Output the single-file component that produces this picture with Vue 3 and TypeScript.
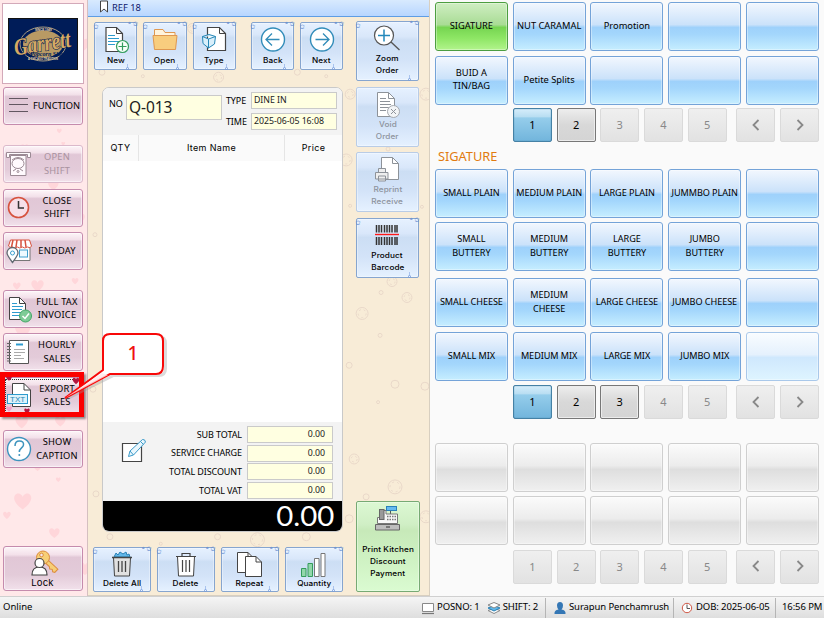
<script setup lang="ts">
interface SideItem { lines: string[]; icon: string; cls: string }
interface ToolItem { lines: string[]; icon: string; cls?: string }
interface PageItem { label: string; state: string }

const icons: Record<string, string> = {
  menu: '<path d="M3 10.500H22M3 16.500H22M3 23.500H22" stroke="#625761" stroke-width="1"/>',
  shift: '<g stroke="#9b8a94" fill="#fffafd"><path d="M2.500 6.500H26.500V11.500H23.500V8.500H5.500V11.500H2.500Z"/><path d="M6.500 9.500H22V29.500H6.500Z"/><ellipse cx="14" cy="17.500" rx="6" ry="5"/><path d="M8 14q6-5 12 0M9 25l3-2M19 25l-3-2" fill="none"/><circle cx="14" cy="25.500" r="1"/></g>',
  clock: '<circle cx="14.500" cy="17.500" r="10" fill="#f6dfe8" stroke="#d6523e" stroke-width="1.600"/><path d="M14.500 11V18H20" fill="none" stroke="#333" stroke-width="1.500"/>',
  shop: '<path d="M7.500 14V27.500H26V14" fill="#fff" stroke="#777"/><path d="M6.500 7H25.500L27.500 13q-1 3-4 1-3 2-5 0-3 2-5 0-3 2-5 0-3 1-4-1Z" fill="#fff" stroke="#d6523e"/><path d="M9 7L7.500 14M13 7L12 14M17 7V14M21 7L22 14" stroke="#d6523e" stroke-width="1.500"/><rect x="15.500" y="17" width="8" height="7" fill="#eefaff" stroke="#3e9fce"/><path d="M8.500 29.500Q3 22 3 20A5.500 5.500 0 0 1 14 20Q14 22 8.500 29.500Z" fill="#fff" stroke="#626a72" stroke-width="1.300"/><circle cx="8.500" cy="20" r="2" fill="#fff" stroke="#3e9fce"/>',
  invoice: '<path d="M5.500 6.500H15.500L21.500 12.500V28.500H5.500Z" fill="#fff" stroke="#444"/><path d="M15.500 6.500V12.500H21.500" fill="none" stroke="#444"/><path d="M8 12.500H13M8 15.500H19M8 18.500H18M8 21.500H17M8 24.500H15" stroke="#2d9bce"/><circle cx="21.500" cy="25" r="6" fill="#7ecb96" stroke="#42a766"/><path d="M18.500 25L21 27.500L25 22.500" fill="none" stroke="#fff" stroke-width="1.500"/>',
  notebook: '<path d="M5.500 6.500H24.500V29.500H5.500Z" fill="#fff" stroke="#555"/><path d="M3 9.500H7M3 12.500H7M3 15.500H7M3 18.500H7M3 21.500H7M3 24.500H7M3 27H7" stroke="#666"/><path d="M12 10.500H19" stroke="#2d9bce" stroke-width="2"/><path d="M10 15.500H21M10 18.500H21M10 21.500H17M10 24.500H20" stroke="#aaa"/>',
  txt: '<path d="M8.500 5.500H20L26.500 12V28.500H8.500Z" fill="#fff" stroke="#444"/><path d="M20 5.500V12H26.500" fill="none" stroke="#444"/><rect x="3.500" y="16.500" width="20" height="9" fill="#dcf2fb" stroke="#2d9bce"/><text x="6" y="24" font-size="8" font-family="Liberation Sans" fill="#2586b4">TXT</text>',
  help: '<circle cx="15" cy="18" r="11.500" fill="#fff" stroke="#3c93bd" stroke-width="1.400"/><path d="M11 15q0-5 4.300-5 4.700 0 4.200 4c-.4 3-4.200 3-4.200 7" fill="none" stroke="#3c93bd" stroke-width="1.500"/><circle cx="15.300" cy="24" r="1" fill="#3c93bd"/>',
  lock: '<g transform="translate(14 8) rotate(43)"><path d="M4-2H18.500V2.500L16.500 3.500L14.500 2L12.500 3.500L10.500 2H4Z" fill="#f7cf76" stroke="#dc8c3d"/></g><circle cx="14" cy="7.500" r="6.500" fill="#f7cf76" stroke="#dc8c3d"/><circle cx="12.500" cy="5" r="1.800" fill="#f6e8ee" stroke="#dc8c3d"/><path d="M3 25q0-8 7.500-8t7.500 8Z" fill="#fff" stroke="#444" stroke-width="1.200"/><circle cx="10.500" cy="13" r="4.500" fill="#fff" stroke="#444" stroke-width="1.200"/>',
  new: '<path d="M5 2.500H15.500L21.500 8.500V26.500H5Z" fill="#fff" stroke="#444" stroke-width="1.200"/><path d="M15.500 2.500V8.500H21.500" fill="none" stroke="#444"/><path d="M7 10.500H14M7 13.500H18M7 16.500H18M7 19.500H14" stroke="#2d9bce"/><circle cx="21.500" cy="21.500" r="6" fill="#f7fff9" stroke="#339c5d" stroke-width="1.200"/><path d="M17.500 21.500H25.500M21.500 17.500V25.500" stroke="#339c5d" stroke-width="1.200"/>',
  open: '<path d="M4.500 22V4.500H13L15 7.500H25V22Z" fill="#fff4dd" stroke="#df9851"/><path d="M3 10.500H27L25.500 24.500H4.500Z" fill="#f8cd7e" stroke="#df9851"/>',
  type: '<path d="M8.500 2.500H20.500L26.500 8.500V25.500H8.500Z" fill="#fff" stroke="#444" stroke-width="1.200"/><path d="M20.500 2.500V8.500H26.500" fill="none" stroke="#444"/><path d="M3.500 11.500L10 9.500L16.500 11.500L15.500 19L9.500 23L4 18.500ZM3.500 11.500L9.500 14L16.500 11.500M9.500 14V23" fill="#d9effb" stroke="#2587b7"/>',
  back: '<circle cx="15" cy="14.500" r="11.500" fill="#fff" stroke="#318cb9" stroke-width="1.400"/><path d="M8.500 14.500H21.500M14 8.500L8 14.500L14 20.500" fill="none" stroke="#318cb9" stroke-width="1.300"/>',
  next: '<circle cx="15" cy="14.500" r="11.500" fill="#fff" stroke="#318cb9" stroke-width="1.400"/><path d="M8.500 14.500H21.500M16 8.500L22 14.500L16 20.500" fill="none" stroke="#318cb9" stroke-width="1.300"/>',
  zoom: '<circle cx="12" cy="11.500" r="9.500" fill="#fff" stroke="#555" stroke-width="1.200"/><path d="M19 18L27.500 26" stroke="#555" stroke-width="1.300"/><path d="M6 11.500H18M12 5.500V17.500" stroke="#2388bb" stroke-width="1.500"/>',
  void: '<path d="M5.500 2.500H16.500L22.500 8.500V26.500H5.500Z" fill="#fff" stroke="#8d9299"/><path d="M16.500 2.500V8.500H22.500M8 8.500H14M8 11.500H18M8 14.500H19M8 17.500H18M8 20.500H14" fill="none" stroke="#8d9299"/><circle cx="21.500" cy="21.500" r="6" fill="#f2f4f6" stroke="#a4a8ae"/><path d="M19 19L24 24M24 19L19 24" stroke="#8d9299"/>',
  reprint: '<path d="M9.500 2.500H20.500L26.500 8.500V24.500H9.500Z" fill="#fff" stroke="#8d9299"/><path d="M20.500 2.500V8.500H26.500" fill="none" stroke="#8d9299"/><path d="M6.500 13.500H13.500V17.500H6.500ZM3.500 17.500H16V24H3.500ZM6.500 21H13.500V26H6.500Z" fill="#eee" stroke="#8d9299"/>',
  barcode: '<path d="M4.500 4V11.500M7 4V11.500M9.500 4V11.500M12.500 4V11.500M15 4V11.500M17.500 4V11.500M20 4V11.500M23 4V11.500M25 4V11.500M4.500 16V24M7 16V24M9.500 16V24M12.500 16V24M15 16V24M17.500 16V24M20 16V24M23 16V24M25 16V24" stroke="#333" stroke-width="1.500"/><path d="M3 13.500H27" stroke="#ff1717" stroke-width="1.400"/>',
  register: '<path d="M17.500 6V9" stroke="#555"/><rect x="13.500" y="1.500" width="10" height="4" fill="#65baf0" stroke="#2981ba"/><path d="M4.500 18.500V12.500H8V5.500H13V9H24.500V18.500Z" fill="#f7f7f7" stroke="#777"/><rect x="6.500" y="4.500" width="4.500" height="10" fill="#999" stroke="#666"/><path d="M14 11.500H23M14 14.500H23" stroke="#777" stroke-width="1.500" stroke-dasharray="1.500 1"/><path d="M2.500 19.500H26.500V25H2.500Z" fill="#bdbdbd" stroke="#666"/><path d="M13 22H17" stroke="#333"/>',
  trashfull: '<path d="M7 7L9 3L11 5L13 2L16 4L19 2L20 5L22 4L23 7Z" fill="#60b7ea" stroke="#2a81b5"/><path d="M6.500 7.500H23.500L22.500 26H7.500Z" fill="#e1e1e1" stroke="#444"/><path d="M5 7.500H25M11.500 11V22M15 11V22M18.500 11V22" stroke="#444" stroke-width="1.300"/>',
  trash: '<path d="M6.500 6.500H23.500L22.500 26H7.500Z" fill="#fff" stroke="#444"/><path d="M5 6.500H25M11.500 10V22M15 10V22M18.500 10V22M11 6V3.500H19V6" fill="none" stroke="#444" stroke-width="1.200"/>',
  repeat: '<path d="M2.500 2.500H13L17.500 7V22.500H2.500Z" fill="#fff" stroke="#444"/><path d="M13 2.500V7" stroke="#444"/><path d="M10.500 6.500H21L26.500 12V26.500H10.500Z" fill="#fff" stroke="#444"/><path d="M21 6.500V12H26.500" fill="none" stroke="#444"/>',
  quantity: '<path d="M2.500 18.500H7V26.500H2.500ZM9 13.500H13.500V26.500H9Z" fill="#92d7aa" stroke="#359b5c"/><path d="M15.500 8.500H20V26.500H15.500ZM22 3.500H26V26.500H22Z" fill="#fff" stroke="#777"/>',
}

const side: SideItem[] = [
  { lines: ['FUNCTION'], icon: 'menu', cls: 'fn' },
  { lines: ['OPEN', 'SHIFT'], icon: 'shift', cls: 'gap-l off' },
  { lines: ['CLOSE', 'SHIFT'], icon: 'clock', cls: '' },
  { lines: ['ENDDAY'], icon: 'shop', cls: '' },
  { lines: ['FULL TAX', 'INVOICE'], icon: 'invoice', cls: 'gap-m' },
  { lines: ['HOURLY', 'SALES'], icon: 'notebook', cls: '' },
  { lines: ['EXPORT', 'SALES'], icon: 'txt', cls: 'focus' },
  { lines: ['SHOW', 'CAPTION'], icon: 'help', cls: 'gap-s' },
]
const topTools: ToolItem[] = [
  { lines: ['New'], icon: 'new' },
  { lines: ['Open'], icon: 'open' },
  { lines: ['Type'], icon: 'type' },
  { lines: ['Back'], icon: 'back', cls: 'apart' },
  { lines: ['Next'], icon: 'next' },
]
const sideTools: ToolItem[] = [
  { lines: ['Zoom', 'Order'], icon: 'zoom' },
  { lines: ['Void', 'Order'], icon: 'void', cls: 'off' },
  { lines: ['Reprint', 'Receive'], icon: 'reprint', cls: 'off' },
  { lines: ['Product', 'Barcode'], icon: 'barcode' },
]
const bottomTools: ToolItem[] = [
  { lines: ['Delete All'], icon: 'trashfull' },
  { lines: ['Delete'], icon: 'trash' },
  { lines: ['Repeat'], icon: 'repeat' },
  { lines: ['Quantity'], icon: 'quantity' },
]
const totals = ['SUB TOTAL', 'SERVICE CHARGE', 'TOTAL DISCOUNT', 'TOTAL VAT']
const groups = ['SIGATURE', 'NUT CARAMAL', 'Promotion', '', '', 'BUID A\nTIN/BAG', 'Petite Splits', '', '', '']
const products = [
  'SMALL PLAIN', 'MEDIUM PLAIN', 'LARGE PLAIN', 'JUMMBO PLAIN', '',
  'SMALL\nBUTTERY', 'MEDIUM\nBUTTERY', 'LARGE\nBUTTERY', 'JUMBO\nBUTTERY', '',
  'SMALL CHEESE', 'MEDIUM\nCHEESE', 'LARGE CHEESE', 'JUMBO CHEESE', '',
  'SMALL MIX', 'MEDIUM MIX', 'LARGE MIX', 'JUMBO MIX', '',
]
const pages = (enabled: number): PageItem[] =>
  [1, 2, 3, 4, 5].map((n) => ({
    label: String(n),
    state: n > enabled ? 'dis' : n === 1 ? 'cur' : 'on',
  }))
const pagers = [pages(2), pages(3), pages(0)]

const heartPath = 'M0 9C-14-1-10-9-5-9C-2-9 0-6 0-5C0-6 2-9 5-9C10-9 14-1 0 9Z'
const hearts: number[][] = [
  [60, 129, 5], [25, 146, 8], [54, 184, 11], [84, 42, 14], [64, 142, 4], [17, 286, 8], [38, 286, 13],
  [76, 281, 7], [23, 331, 16], [22, 424, 13], [61, 423, 11], [38, 469, 9], [72, 451, 7], [23, 504, 18],
  [7, 518, 8], [55, 536, 11], [59, 482, 5], [86, 572, 14], [3, 250, 12], [80, 218, 12],
]
const bubbles: number[][] = [
  [14, 72, 3], [55, 76, 1.5], [131, 77, 5], [105, 28, 5], [210, 72, 3], [239, 76, 1.5],
  [8, 495, 3], [22, 538, 3], [130, 538, 3], [259, 160, 6], [339, 94, 6], [263, 94, 5], [301, 149, 2],
  [263, 206, 1.5], [335, 207, 1.5], [305, 282, 5], [275, 314, 6], [294, 293, 2], [320, 298, 5], [293, 336, 2],
  [262, 366, 3], [308, 385, 4], [338, 387, 4], [291, 403, 1.5], [267, 460, 5], [279, 498, 3], [308, 488, 7],
  [262, 520, 4], [339, 518, 6], [73, 545, 1.5], [219, 538, 4], [170, 541, 7],
  [5, 390, 3], [7, 235, 2],
]
</script>

<template>
  <div class="window">
    <main class="work">
      <aside class="sidebar">
        <svg class="decor" viewBox="0 0 88 596">
          <g v-for="(h, i) in hearts" :key="i" :transform="`translate(${h[0]} ${h[1]}) scale(${h[2] / 20})`">
            <path :d="heartPath" fill="#ffd6da" />
          </g>
        </svg>
        <div class="brand">
          <svg viewBox="0 0 70 52">
            <rect width="70" height="52" fill="#001c58" />
            <ellipse cx="35" cy="26" rx="23" ry="17" fill="none" stroke="#a99b80" />
            <ellipse cx="35" cy="26" rx="20" ry="13.500" fill="#b99a64" />
            <text x="27" y="13" class="tiny">SINCE 1949</text>
            <g transform="rotate(-9 35 28)">
              <text x="6" y="33" class="script" textLength="57" lengthAdjust="spacingAndGlyphs">Garrett</text>
            </g>
            <text x="22" y="38" class="sub" textLength="38" lengthAdjust="spacingAndGlyphs">Popcorn Shops</text>
            <text x="20" y="42" class="tiny" textLength="30" lengthAdjust="spacingAndGlyphs">A CHICAGO TRADITION</text>
            <rect x=".5" y=".5" width="69" height="51" fill="none" stroke="#111" />
          </svg>
        </div>
        <button v-for="s in side" :key="s.lines.join()" class="sbtn" :class="s.cls">
          <svg viewBox="0 0 29 36" fill="none" v-html="icons[s.icon]"></svg>
          <span><b v-for="l in s.lines" :key="l">{{ l }}</b></span>
        </button>
        <button class="sbtn lock">
          <svg viewBox="0 0 30 28" fill="none" v-html="icons.lock"></svg>
          <span><b>Lock</b></span>
        </button>
      </aside>

      <section class="order">
        <svg class="decor" viewBox="0 0 342 596">
          <g v-for="(b, i) in bubbles" :key="i" fill="none" stroke="#e9d8c9">
            <circle :cx="b[0]" :cy="b[1]" :r="b[2]" />
            <circle v-if="b[2] > 4" :cx="b[0]" :cy="b[1]" :r="b[2] - 2" stroke-dasharray="2 3" />
          </g>
        </svg>
        <header class="ref">
          <svg viewBox="0 0 10 13"><path d="M1.500 1H8.500V12L5 9L1.500 12Z" fill="#fff" stroke="#444" /></svg>
          <span>REF 18</span>
        </header>
        <div class="order-body">
          <div class="left">
            <div class="toolbar">
              <button v-for="t in topTools" :key="t.icon" class="tool" :class="t.cls">
                <svg class="ico" viewBox="0 0 30 29" fill="none" v-html="icons[t.icon]"></svg>
                <span>{{ t.lines[0] }}</span>
                <i class="star tl">✩</i><i class="star tr">✩</i><i class="star dot">°</i><i class="drop"></i>
              </button>
            </div>
            <div class="ticket">
              <div class="meta">
                <label class="no">NO</label>
                <div class="field big">Q-013</div>
                <div class="rows">
                  <div><label>TYPE</label><div class="field">DINE IN</div></div>
                  <div><label>TIME</label><div class="field">2025-06-05 16:08</div></div>
                </div>
              </div>
              <div class="cols"><span>QTY</span><span>Item Name</span><span>Price</span></div>
              <div class="items"></div>
              <div class="totals">
                <svg class="pen" viewBox="0 0 26 26">
                  <path d="M1.500 6.500H20.500V24.500H1.500Z" fill="#fff" stroke="#444" stroke-width="1.200" />
                  <path d="M7.500 19.500L9 14L21.500 2.500Q24 2 24.500 5L12.500 18Z" fill="#eaf7fd" stroke="#3c9bca" />
                  <path d="M19.500 4.500L22.500 7.500M9 14L12.500 18" stroke="#3c9bca" />
                </svg>
                <div class="sums">
                  <div v-for="t in totals" :key="t"><label>{{ t }}</label><div class="field num">0.00</div></div>
                </div>
              </div>
              <div class="grand"><span>0.00</span></div>
            </div>
            <div class="bottombar">
              <button v-for="t in bottomTools" :key="t.icon" class="tool wide">
                <svg class="ico" viewBox="0 0 30 29" fill="none" v-html="icons[t.icon]"></svg>
                <span>{{ t.lines[0] }}</span>
                <i class="star tl">✩</i><i class="star tr">✩</i><i class="star dot">°</i><i class="drop"></i>
              </button>
            </div>
          </div>
          <div class="right">
            <button v-for="t in sideTools" :key="t.icon" class="tool tall" :class="t.cls">
              <svg class="ico" viewBox="0 0 30 29" fill="none" v-html="icons[t.icon]"></svg>
              <span v-for="l in t.lines" :key="l">{{ l }}</span>
              <template v-if="!t.cls"><i class="star tl">✩</i><i class="star tr">✩</i><i class="star dot">°</i><i class="drop"></i></template>
            </button>
            <button class="tool pay">
              <svg class="ico" viewBox="0 0 30 29" fill="none" v-html="icons.register"></svg>
              <span>Print Kitchen</span><span>Discount</span><span>Payment</span>
            </button>
          </div>
        </div>
      </section>

      <section class="menu">
        <div class="grid">
          <button v-for="(g, i) in groups" :key="i" class="cell" :class="{ green: i === 0 }">{{ g }}</button>
        </div>
        <nav class="pager p1">
          <button v-for="p in pagers[0]" :key="p.label" :class="p.state">{{ p.label }}</button>
          <button class="dis prev"><svg viewBox="0 0 10 12"><path d="M7.500 1L2.500 6L7.500 11" /></svg></button>
          <button class="dis"><svg viewBox="0 0 10 12"><path d="M2.500 1L7.500 6L2.500 11" /></svg></button>
        </nav>
        <h2>SIGATURE</h2>
        <div class="grid products">
          <button v-for="(g, i) in products" :key="i" class="cell" :class="{ pale: i === 19 }">{{ g }}</button>
        </div>
        <nav class="pager p2">
          <button v-for="p in pagers[1]" :key="p.label" :class="p.state">{{ p.label }}</button>
          <button class="dis prev"><svg viewBox="0 0 10 12"><path d="M7.500 1L2.500 6L7.500 11" /></svg></button>
          <button class="dis"><svg viewBox="0 0 10 12"><path d="M2.500 1L7.500 6L2.500 11" /></svg></button>
        </nav>
        <div class="grid modifiers">
          <button v-for="n in 10" :key="n" class="cell gray"></button>
        </div>
        <nav class="pager p3">
          <button v-for="p in pagers[2]" :key="p.label" :class="p.state">{{ p.label }}</button>
          <button class="dis prev"><svg viewBox="0 0 10 12"><path d="M7.500 1L2.500 6L7.500 11" /></svg></button>
          <button class="dis"><svg viewBox="0 0 10 12"><path d="M2.500 1L7.500 6L2.500 11" /></svg></button>
        </nav>
      </section>
    </main>

    <footer class="status">
      <span class="online">Online</span>
      <div class="seg pos">
        <svg viewBox="0 0 14 14"><path d="M1.500 2.500H12.500V10.500H1.500Z" fill="#fff" stroke="#888" /><path d="M1 12.500H13" stroke="#777" stroke-width="1.200" /></svg>
        <span>POSNO: 1</span>
        <svg class="layers" viewBox="0 0 14 14"><path d="M1 9.500L7 12.500L13 9.500L7 7.500Z" fill="#fff" stroke="#888" /><path d="M1 7L7 10L13 7L7 4.500Z" fill="#60b7ea" stroke="#2a81b5" /><path d="M1 4L7 7L13 4L7 1.500Z" fill="#fff" stroke="#888" /></svg>
        <span>SHIFT: 2</span>
      </div>
      <div class="seg user">
        <svg viewBox="0 0 14 14"><path d="M4 4.500a3 3.500 0 0 1 6 0Q10 7 8.500 8.500Q13 9 12.500 13H1.500Q1 9 5.500 8.500Q4 7 4 4.500Z" fill="#3577b5" /></svg>
        <span>Surapun Penchamrush</span>
      </div>
      <div class="seg dob">
        <svg viewBox="0 0 14 14"><circle cx="7" cy="7" r="4.700" fill="#fff" stroke="#cf5745" /><path d="M7 3.500V7.500H10" fill="none" stroke="#555" /></svg>
        <span>DOB: 2025-06-05</span>
      </div>
      <div class="seg time"><span>16:56 PM</span></div>
    </footer>

    <div class="marker">
      <svg viewBox="0 0 74 35">
        <path :d="heartPath" fill="#b3163f" transform="translate(4 1) scale(.3)" />
        <path :d="heartPath" fill="#b3163f" transform="translate(71 4) scale(.35)" />
        <path :d="heartPath" fill="#b3163f" transform="translate(22 34) scale(.28)" />
        <path :d="heartPath" fill="#f3a0c8" transform="translate(4 32) scale(.3)" />
      </svg>
    </div>
    <svg class="callout" viewBox="0 0 110 72">
      <path d="M52 3H97Q104 3 104 10V35Q104 42 97 42H52L6 65L45 38V10Q45 3 52 3Z" fill="#fff" stroke="#999" stroke-width="3" opacity=".35" transform="translate(1.500 1.500)" />
      <path d="M50 2H96Q103 2 103 9V34Q103 42 96 42H50L5 66L43 38V9Q43 2 50 2Z" fill="#fff" stroke="#f80808" stroke-width="2" />
      <path d="M42 41L5 66L48 43" fill="#ffe9ea" fill-opacity=".8" />
      <text x="73" y="28" text-anchor="middle">1</text>
    </svg>
  </div>
</template>

<style>
body { margin: 0; overflow: hidden; }
</style>

<style scoped>
* { box-sizing: border-box; }
.window { position: relative; width: 824px; height: 618px; display: flex; flex-direction: column; overflow: hidden; background: #fafafa; font-family: "Noto Sans", sans-serif; color: #000; }
.work { flex: 1; display: flex; min-height: 0; }
button { font: inherit; padding: 0; margin: 0; color: #000; display: flex; }
.decor { position: absolute; inset: 0; width: 100%; height: 100%; }

.sidebar { position: relative; width: 88px; height: 596px; background: #ffe8e9; border-right: 1px solid #d5bfc0; padding: 3px 0 0 3px; display: flex; flex-direction: column; gap: 5.500px; }
.brand { position: relative; width: 82px; height: 81px; margin: 0 0 -2.500px -1px; background: #fff; border: 1px solid #d3a9b9; display: flex; align-items: center; justify-content: center; flex: none; }
.brand svg { width: 70px; height: 52px; overflow: visible; }
.script { font: italic bold 24px "Liberation Serif", serif; fill: #d5a963; stroke: #00194f; stroke-width: 1.200px; paint-order: stroke; }
.sub { font: italic bold 6px "Liberation Serif", serif; fill: #001c58; }
.tiny { font: bold 3px "Liberation Sans", sans-serif; fill: #eed9ae; }
.sbtn { position: relative; flex: none; width: 80px; height: 38px; border: 1px solid #c58bad; border-radius: 3px; background: linear-gradient(#fdf5f8 0, #f3e1ea 18%, #e1c7d6 24%, #e3cbd9 65%, #f2e1eb 100%); box-shadow: inset 0 0 0 1px rgba(255,255,255,.55); align-items: center; }
.sbtn svg { width: 29px; height: 36px; flex: none; margin-left: 0; }
.sbtn span { flex: 1; display: flex; flex-direction: column; align-items: center; margin-left: -1px; padding-bottom: 1px; }
.sbtn b { font-weight: 400; font-size: 9.300px; line-height: 13.500px; letter-spacing: .2px; white-space: nowrap; }
.sbtn.fn svg { margin-left: 2px; }
.sbtn.fn span { margin-left: -4px; }
.sbtn.fn b { font-size: 9.300px; letter-spacing: -.05px; }
.sbtn.off { color: #a9929f; border-color: #dbb9cb; }
.sbtn.gap-l { margin-top: 14.500px; }
.sbtn.gap-m { margin-top: 14px; }
.sbtn.gap-s { margin-top: 10px; }
.sbtn.focus { outline: 1px dotted #333; outline-offset: -3px; }
.sbtn.lock { margin: auto 0 5px; height: 45px; flex-direction: column; justify-content: flex-start; padding-top: 3px; }
.lock svg { width: 30px; height: 28px; margin-left: 1px; }
.lock span { margin: -1px 0 0 -1px; flex: none; }
.lock b { font-family: Inter, sans-serif; font-size: 9.500px; line-height: 12px; }

.order { position: relative; width: 342px; height: 596px; background: #f8ecd7; border-right: 1px solid #d8cfc0; border-bottom: 1px solid #d8cfc0; display: flex; flex-direction: column; }
.ref { position: relative; height: 17px; flex: none; display: flex; align-items: center; padding-left: 11px; gap: 3px; background: linear-gradient(#d8eafe, #b8d6ff); border-bottom: 1px solid #5f9de4; font-size: 9.300px; color: #10186a; }
.ref svg { width: 10px; height: 13px; margin-top: -3px; }
.ref span { margin-top: -2px; }
.order-body { position: relative; flex: 1; display: flex; }
.left { width: 268px; padding-left: 5px; display: flex; flex-direction: column; }
.toolbar { display: flex; gap: 6px; padding: 5px 0 0 1px; }
.tool { position: relative; flex: none; width: 43.300px; height: 48px; flex-direction: column; align-items: center; border: 1px solid #86a5cf; border-radius: 2px; background: linear-gradient(#e6f1ff 0, #d9e7fa 25%, #ccdef4 32%, #d3e3f8 65%, #e5f1ff 100%); box-shadow: inset 0 0 0 1px rgba(255,255,255,.35); font-family: Inter, sans-serif; font-size: 7.300px; font-weight: 500; line-height: 10px; letter-spacing: .1px; white-space: nowrap; }
.tool > span { transform: scaleX(1.12); }
.tool.apart { margin-left: 9px; }
.ico { width: 30px; height: 29px; margin-top: 2px; flex: none; }
.tool .ico + span { margin-top: 1.500px; }
.tool.wide { width: 58px; height: 45px; }
.tool.wide .ico + span { margin-top: 0; }
.tool.tall { width: 63px; height: 60px; margin-bottom: 5.500px; }
.tool.tall span { line-height: 12px; }
.tool.tall .ico + span { margin-top: 0; }
.tool.off { border-color: #b9cce6; color: #8d939c; }
.star { position: absolute; font: 7px/7px "DejaVu Sans", sans-serif; color: #5681cb; letter-spacing: 0; }
.tl { left: -2px; top: 1px; } .tr { right: -2px; top: -2px; } .dot { right: 5px; top: -1px; }
.drop { position: absolute; right: 7px; bottom: -1px; width: 3px; height: 3px; border: 1px solid #789ddd; border-radius: 50%; }
.drop::before { content: ""; position: absolute; left: 0; bottom: 2px; width: 1px; height: 3px; background: #a9c3ee; }
.ticket { width: 241px; height: 445px; margin: 17px 0 0 9px; border: 1px solid #c9c9c9; border-radius: 7px; background: #fff; overflow: hidden; display: flex; flex-direction: column; }
.meta { height: 47px; background: #f3f3f3; display: flex; padding: 4px 0 0 6px; }
.no { width: 17px; padding-top: 6px; }
label { font-size: 9px; line-height: 12px; white-space: nowrap; letter-spacing: -.1px; }
.field { height: 17px; border: 1px solid #cacaca; background: #ffffe1; font-size: 8.800px; line-height: 15px; padding-left: 2px; white-space: nowrap; letter-spacing: -.05px; color: #222; }
.field.big { width: 96px; height: 25px; margin-top: 3px; font-size: 15.500px; line-height: 23px; }
.rows { display: flex; flex-direction: column; gap: 4px; margin-left: 4px; }
.rows > div { display: flex; align-items: center; }
.rows label { width: 25px; }
.rows .field { width: 86px; }
.cols { height: 26px; background: #fafafa; display: flex; font: 400 9px/26px Inter, sans-serif; letter-spacing: .35px; text-align: center; }
.cols span:nth-child(1) { width: 36px; border-right: 1px solid #e5e5e5; }
.cols span:nth-child(2) { width: 146px; border-right: 1px solid #e5e5e5; }
.cols span:nth-child(3) { flex: 1; }
.items { flex: 1; }
.totals { height: 79px; background: #f3f3f3; display: flex; padding-top: 4px; }
.pen { width: 26px; height: 26px; margin: 11px 0 0 18px; }
.sums { flex: 1; display: flex; flex-direction: column; gap: 1.700px; padding-right: 9px; }
.sums > div { display: flex; justify-content: flex-end; align-items: center; gap: 5px; }
.num { width: 86px; text-align: right; padding-right: 7px; }
.grand { height: 30px; background: #000; color: #fff; text-align: right; padding-right: 8px; font: 26px/30px Lato, sans-serif; }
.grand span { display: inline-block; transform: scaleX(1.13); transform-origin: right; }
.bottombar { display: flex; gap: 6px; margin-top: auto; padding-bottom: 3px; }
.right { display: flex; flex-direction: column; padding-top: 4px; }
.pay { width: 64px; height: 91px; margin-top: auto; margin-bottom: 3px; border-color: #77aa74; background: linear-gradient(#dcf8d3 0, #d0efc5 25%, #c7e9b9 32%, #cff2c3 65%, #dafbd1 100%); }
.pay span { line-height: 12px; }
.pay .ico { margin-top: 3px; }
.tool.pay .ico + span { margin-top: 9.500px; }

.menu { flex: 1; padding: 2px 5px 0 5px; display: flex; flex-direction: column; }
.grid { display: grid; grid-template-columns: repeat(5, 73px); justify-content: space-between; grid-auto-rows: 49px; row-gap: 4.500px; }
.cell { position: relative; align-items: center; justify-content: center; text-align: center; white-space: pre-line; padding-bottom: 1.500px; border: 1px solid #74a3d8; border-radius: 3px; font-size: 9.300px; line-height: 13.500px; background: linear-gradient(#f2f7fe 0, #cbe2fa 46%, #9ed1fb 52%, #a3d6fc 66%, #c6eeff 100%); box-shadow: inset 0 0 0 1px rgba(255,255,255,.35); }
.products .cell { font-size: 9.100px; letter-spacing: -.05px; }
.cell.green { border-color: #4c9e40; background: linear-gradient(#cfeec2 0, #a9dc95 46%, #76d551 52%, #8ee665 75%, #b2f48c 100%); }
.cell.pale { border-color: #a9c8ea; background: linear-gradient(#f9fcff 0, #e5f1fd 46%, #cfe8fd 52%, #def4ff 100%); }
.cell.gray { border-color: #cfcfcf; background: linear-gradient(#fbfbfb 0, #ececec 46%, #dedede 54%, #f0f0f0 100%); }
.pager { display: flex; gap: 4.700px; padding-left: 78px; height: 34px; }
.pager button { width: 39px; height: 34px; flex: none; align-items: center; justify-content: center; border: 1px solid #dadada; border-radius: 2px; padding-bottom: 1px; font-size: 11px; background: linear-gradient(#efefef, #e2e2e2); color: #888; }
.pager .on { border-color: #777; background: linear-gradient(#eee 0, #e2e2e2 25%, #d8d8d8 50%, #d4d4d4 100%); color: #000; box-shadow: inset 0 0 0 1px #ececec; }
.pager .cur { border-color: #4581a5; background: linear-gradient(#d5edfb 0, #b9def2 24%, #95cdeb 28%, #72b5dc 100%); color: #000; box-shadow: inset 0 0 1px #3b6d8d; }
.pager .prev { margin-left: 5px; }
.pager svg { width: 10px; height: 12px; fill: none; stroke: #888; stroke-width: 1.800px; }
.p1 { margin-top: 3.500px; }
h2 { margin: 6px 0 0 3px; height: 20.500px; font-weight: 400; font-size: 12.800px; line-height: 16px; color: #e17b10; }
.products { grid-template-rows: 49px 49px 49px 49px; }
.products .cell:nth-child(n+11) { top: 2.500px; }
.p2 { margin-top: 7px; }
.modifiers { margin-top: 23.500px; }
.p3 { margin-top: 4.500px; }

.status { height: 22px; flex: none; display: flex; align-items: center; background: linear-gradient(#f5f5f5, #dedede); border-top: 1px solid #d0d0d0; font-size: 9.500px; letter-spacing: -.1px; }
.online { width: 421px; padding-left: 3px; letter-spacing: 0; margin-top: -2px; }
.seg { display: flex; align-items: center; height: 20px; white-space: nowrap; }
.seg > span { margin-top: -2px; }
.seg svg { width: 14px; height: 14px; flex: none; }
.seg + .seg { border-left: 1px solid #b5b5b5; }
.pos { width: 124px; gap: 2px; } .pos .layers { margin-left: 5px; }
.user { width: 128px; padding-left: 7px; gap: 2px; }
.dob { width: 102px; padding-left: 6px; gap: 2px; }
.time { flex: 1; padding-left: 6px; }

.marker { position: absolute; left: 0; top: 372px; width: 84px; height: 45px; border: 5px solid #fb0000; box-shadow: 2px 2px 2px rgba(0,0,0,.4); }
.marker svg { display: block; width: 74px; height: 35px; }
.callout { position: absolute; left: 60px; top: 332px; width: 110px; height: 72px; }
.callout text { font: 500 19px "Noto Sans", sans-serif; fill: #f01010; }
</style>
